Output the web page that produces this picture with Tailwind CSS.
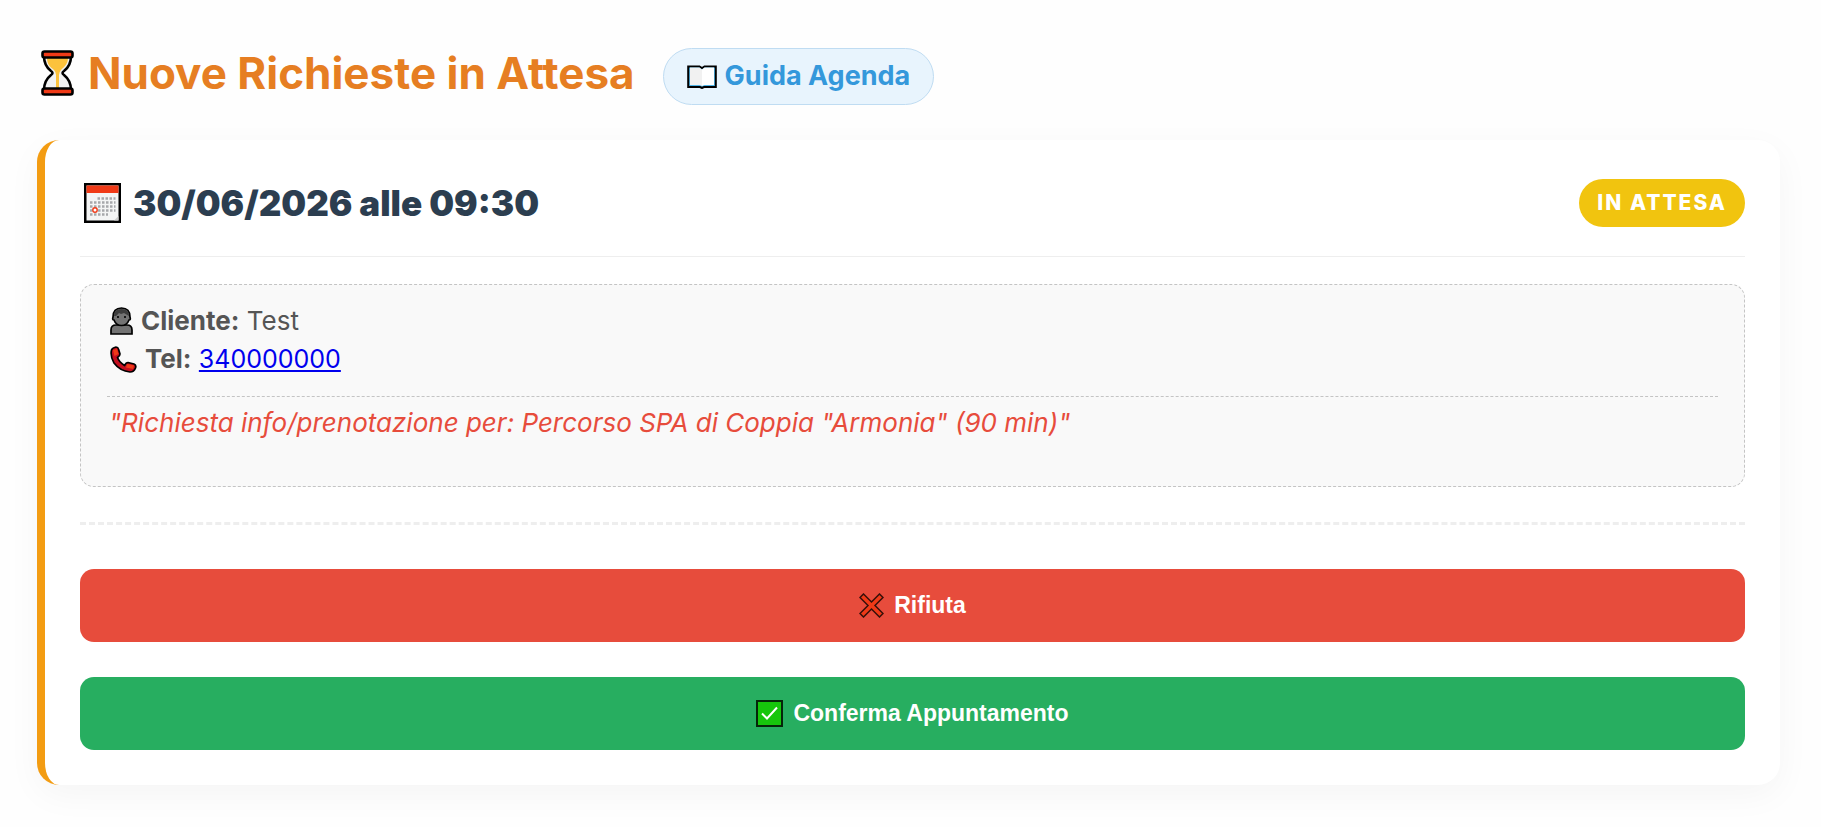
<!DOCTYPE html>
<html lang="it">
<head>
<meta charset="utf-8">
<meta name="viewport" content="width=device-width, initial-scale=1">
<title>Nuove Richieste in Attesa</title>
<script src="https://cdn.jsdelivr.net/npm/@tailwindcss/browser@4"></script>
</head>
<body class="min-h-screen bg-[#fefefe] pt-12 pr-[41px] pb-10 pl-[37px] font-[Inter,sans-serif]">
<header class="mb-[35px] flex flex-wrap items-start gap-7">
  <h1 class="flex items-center gap-[14px] pl-1 text-[44px] leading-[50px] font-bold text-[#e67e22]">
    <svg class="h-[46px] w-[33px] shrink-0" viewBox="0 0 33 46" aria-hidden="true">
      <path d="M4 6C4 14 7 18 11 21Q14 23 11 25C6 29 3 34 3 41H30C30 34 27 29 22 25Q19 23 22 21C26 18 29 14 29 6Z" fill="#f2f2f2"/>
      <path d="M6 8H27C27 14 23 17 20 20Q18 22 18 25V38H15V25Q15 22 13 20C9 17 6 14 6 8Z" fill="#fcc23d"/>
      <path d="M3 6C3 14 6 18 10 21Q13 23 10 25C5 29 3 34 3 40M30 6C30 14 27 18 23 21Q20 23 23 25C28 29 30 34 30 40" fill="none" stroke="#000" stroke-width="2.6"/>
      <rect x="1.500" y="1.500" width="30" height="6" rx="2" fill="#f03a17" stroke="#000" stroke-width="2.600"/>
      <rect x="1.500" y="38.500" width="30" height="6" rx="2" fill="#f03a17" stroke="#000" stroke-width="2.600"/>
    </svg>
    Nuove Richieste in Attesa
  </h1>
  <a href="#guida" class="flex h-[57px] items-center gap-2 rounded-full border border-[#bfdcf2] bg-[#e8f4fd] px-[23px] text-[27px] font-bold text-[#3498db]">
    <svg class="h-6 w-[30px] shrink-0" viewBox="0 0 30 24" aria-hidden="true">
      <path d="M1.200 1.500H12.500L15 3L17.500 1.500H28.800V22H17L15 23L13 22H1.200Z" fill="#4fb4e6" stroke="#000" stroke-width="2"/>
      <path d="M3 2.500H12.500L15 4.500V21L12.500 20H3Z" fill="#f1f1f1"/>
      <path d="M27 2.500H17.500L15 4.500V21L17.500 20H27Z" fill="#fff"/>
    </svg>
    Guida Agenda
  </a>
</header>
<main>
<article class="rounded-[22px] border-l-8 border-[#f39c12] bg-white p-[35px] shadow-[0_10px_35px_rgba(0,0,0,0.04)]">
  <div class="flex items-center justify-between border-b border-[#eeeeee] pb-[25px]">
    <h2 class="flex h-14 items-center gap-3 pl-1 text-[35px] font-black text-[#2c3e50]">
      <svg class="h-10 w-[37px] shrink-0" viewBox="0 0 37 40" aria-hidden="true">
        <rect x="1.250" y="1.250" width="34.500" height="37.500" fill="#f4f5f5" stroke="#000" stroke-width="2.500"/>
        <path d="M2.500 2.500H34.500V10H2.500Z" fill="#f03a17"/>
        <path d="M30 37.500L34.500 33V37.500Z" fill="#ccc"/>
        <g stroke="#a6a8ab" stroke-width="2.500" stroke-dasharray="2.500 1.500">
          <path d="M13.500 15.500H31.500M6 19.500H31.500M6 23.500H31.500M6 27.500H31.500M6 31.500H24"/>
        </g>
        <circle cx="11" cy="27" r="2.200" fill="#fff" stroke="#f03a17" stroke-width="1.400"/>
      </svg>
      30/06/2026 alle 09:30
    </h2>
    <span class="flex h-12 items-center rounded-full bg-[#f1c40f] px-[18px] text-[21px] font-extrabold tracking-[2px] text-white">IN ATTESA</span>
  </div>
  <section class="mt-[27px] rounded-[14px] border border-dashed border-[#c4c4c4] bg-[#f9f9f9] px-[26px] pt-[17px] pb-11 text-[26px] leading-[38px] text-[#555555]">
    <p class="flex items-center gap-2 pl-[3px]">
      <svg class="h-7 w-[23px] shrink-0" viewBox="0 0 23 28" aria-hidden="true">
        <path d="M1 27V23Q1 18 6 18H17Q22 18 22 23V27Z" fill="#737373" stroke="#000" stroke-width="1.700"/>
        <path d="M3 10Q3 1 11.500 1T20 10Q21 13 19 13Q17 18.500 11.500 18.500T4 13Q2 13 3 10Z" fill="#737373" stroke="#000" stroke-width="1.700"/>
        <path d="M4 9Q4 2 11.500 2T19 9L14 6L11 7L9 6L6 9Z" fill="#3c3c3c"/>
        <path d="M8 9V11M15 9V11" stroke="#000" stroke-width="1.600"/>
      </svg>
      <span><strong class="font-bold">Cliente:</strong> Test</span>
    </p>
    <p class="flex items-center gap-2 pl-[3px]">
      <svg class="h-[27px] w-[27px] shrink-0" viewBox="0 0 27 27" aria-hidden="true">
        <path d="M1.500 4Q2 2 6 1Q8 1 8.500 3L10 8Q10 10 7.500 11.500Q9 16 14.500 19.500Q16 16.500 18 16.500L24 18Q26.500 19 25.500 22Q24 26 20 26Q10 25 4 17Q0 10 1.500 4Z" fill="#c50f1f" stroke="#000" stroke-width="1.700" stroke-linejoin="round"/>
        <path d="M3 4L7 3L8.500 8L4.500 10ZM17 18L24 19.500L23 23L16 21.500Z" fill="#f03a17"/>
      </svg>
      <span><strong class="font-bold">Tel:</strong> <a href="tel:340000000" class="text-[25px] text-[#0000ee] underline decoration-2 underline-offset-2">340000000</a></span>
    </p>
    <p class="mt-[18px] border-t border-dashed border-[#c4c4c4] pt-[7px] pl-[2px] text-[#e74c3c] italic">"Richiesta info/prenotazione per: Percorso SPA di Coppia "Armonia" (90 min)"</p>
  </section>
  <div class="mt-[35px] flex flex-col gap-[35px] border-t-3 border-dashed border-[#eeeeee] pt-11 font-['Liberation_Sans',Arial,sans-serif] text-[23px] font-bold text-white">
    <button type="button" class="flex h-[73px] w-full cursor-pointer items-center justify-center gap-2.5 rounded-[14px] bg-[#e74c3c]">
      <svg class="h-[25px] w-[25px] shrink-0" viewBox="0 0 25 25" aria-hidden="true">
        <path d="M4.500 1L12.500 9L20.500 1L24 4.500L16 12.500L24 20.500L20.500 24L12.500 16L4.500 24L1 20.500L9 12.500L1 4.500Z" fill="#f03a17" stroke="#35100b" stroke-width="1.500"/>
      </svg>
      Rifiuta
    </button>
    <button type="button" class="flex h-[73px] w-full cursor-pointer items-center justify-center gap-2.5 rounded-[14px] bg-[#27ae60]">
      <svg class="h-[27px] w-[27px] shrink-0" viewBox="0 0 27 27" aria-hidden="true">
        <rect x="1" y="1" width="25" height="25" fill="#16c60c" stroke="#06250a" stroke-width="2"/>
        <path d="M6 13.500L11 18.500L21 7.500" fill="none" stroke="#fff" stroke-width="2"/>
      </svg>
      Conferma Appuntamento
    </button>
  </div>
</article>
</main>
</body>
</html>
